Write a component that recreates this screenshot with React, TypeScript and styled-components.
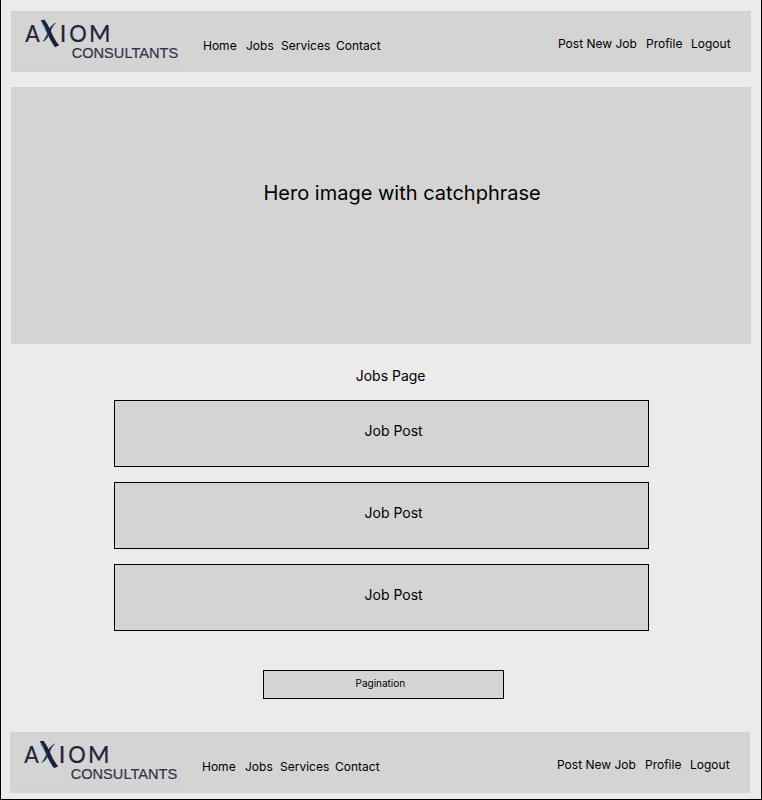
import React from "react";
import styled, { createGlobalStyle } from "styled-components";

const GlobalStyle = createGlobalStyle`
  * { box-sizing: border-box; }
  body { margin: 0; background: #ebebeb; }
`;

const Page = styled.div`
  width: 762px;
  height: 800px;
  padding: 11px 10px 0;
  display: flex;
  flex-direction: column;
  background: #ebebeb;
  border: 1px solid #000;
  border-top: 0;
  color: #000;
  font-family: Inter, "Liberation Sans", sans-serif;
`;

const Bar = styled.div<{ $shift?: number }>`
  width: 740px;
  height: 61px;
  flex: none;
  display: flex;
  margin-left: ${(p) => p.$shift ?? 0}px;
  background: #d4d4d4;
`;

const Logo = styled.svg`
  width: 176px;
  height: 61px;
  flex: none;
`;

const Nav = styled.nav<{ $top: number; $left: number }>`
  display: flex;
  height: 16px;
  margin-top: ${(p) => p.$top}px;
  margin-left: ${(p) => p.$left}px;
`;

const NavLink = styled.a<{ $w: number }>`
  width: ${(p) => p.$w}px;
  font-size: 12px;
  line-height: 16px;
  white-space: nowrap;
`;

const Hero = styled.section`
  width: 740px;
  height: 257px;
  flex: none;
  margin-top: 15px;
  padding: 93px 0 0 252.5px;
  background: #d4d4d4;
`;

const HeroText = styled.h1`
  margin: 0;
  font-size: 20px;
  font-weight: 400;
  line-height: 26px;
  white-space: nowrap;
`;

const Title = styled.h2`
  margin: 23px 0 0 344.7px;
  font-size: 14px;
  font-weight: 400;
  line-height: 18px;
`;

const JobList = styled.main`
  display: flex;
  flex-direction: column;
  gap: 15px;
  margin: 15px 0 0 103px;
`;

const JobPost = styled.article`
  width: 535px;
  height: 67px;
  padding: 21px 0 0 249.5px;
  border: 1px solid #000;
  background: #d4d4d4;
  font-size: 14px;
  line-height: 18px;
`;

const Pagination = styled.div`
  width: 241px;
  height: 29px;
  flex: none;
  margin: 39px 0 33px 252px;
  padding: 5px 0 0 91.5px;
  border: 1px solid #000;
  background: #d4d4d4;
  font-size: 10px;
  line-height: 14px;
`;

function AxiomLogo() {
  return (
    <Logo viewBox="0 0 176 61" role="img" aria-label="Axiom Consultants">
      <g fill="#24213a" stroke="#24213a" strokeWidth="0.2" fontFamily="Lato, sans-serif" fontSize="23.5">
        <text x="14.3" y="31.2" textLength="14.5" lengthAdjust="spacingAndGlyphs">A</text>
        <text x="48.8" y="31.2">I</text>
        <text x="58.2" y="31.2" textLength="17.5" lengthAdjust="spacingAndGlyphs">O</text>
        <text x="78" y="31.2" textLength="21.5" lengthAdjust="spacingAndGlyphs">M</text>
      </g>
      <path d="M46 11.3Q40 13.5 36.8 20Q35 27 31 31Q36.5 29 39.2 22Q41.5 14 46 11.3Z" fill="#233b55" />
      <path d="M31 11.5L43.5 34.8" stroke="#2c9fc4" strokeWidth="1.5" fill="none" />
      <path d="M29.5 9.3L33.5 8.8Q36 12 39.3 18.5Q43 28.5 48.2 34.3L44.2 36.3Q39.5 30 36.4 22.5Q33.5 13.5 29.5 9.3Z" fill="#211f36" />
      <text x="60.7" y="46.6" fill="#34314a" stroke="#34314a" strokeWidth="0.2" fontFamily="Liberation Sans, sans-serif" fontSize="14.4" textLength="106.5" lengthAdjust="spacingAndGlyphs">CONSULTANTS</text>
      <path d="M0 53.5H175" stroke="#cfcfcf" />
    </Logo>
  );
}

function SiteBar({ shift }: { shift?: number }) {
  return (
    <Bar $shift={shift}>
      <AxiomLogo />
      <Nav $top={27} $left={16}>
        <NavLink $w={43}>Home</NavLink>
        <NavLink $w={35}>Jobs</NavLink>
        <NavLink $w={55}>Services</NavLink>
        <NavLink $w={50}>Contact</NavLink>
      </Nav>
      <Nav $top={25} $left={172}>
        <NavLink $w={88}>Post New Job</NavLink>
        <NavLink $w={45}>Profile</NavLink>
        <NavLink $w={44}>Logout</NavLink>
      </Nav>
    </Bar>
  );
}

export default function App() {
  return (
    <>
      <GlobalStyle />
      <Page>
        <SiteBar />
        <Hero>
          <HeroText>Hero image with catchphrase</HeroText>
        </Hero>
        <Title>Jobs Page</Title>
        <JobList>
          {[1, 2, 3].map((id) => (
            <JobPost key={id}>Job Post</JobPost>
          ))}
        </JobList>
        <Pagination>Pagination</Pagination>
        <SiteBar shift={-1} />
      </Page>
    </>
  );
}
